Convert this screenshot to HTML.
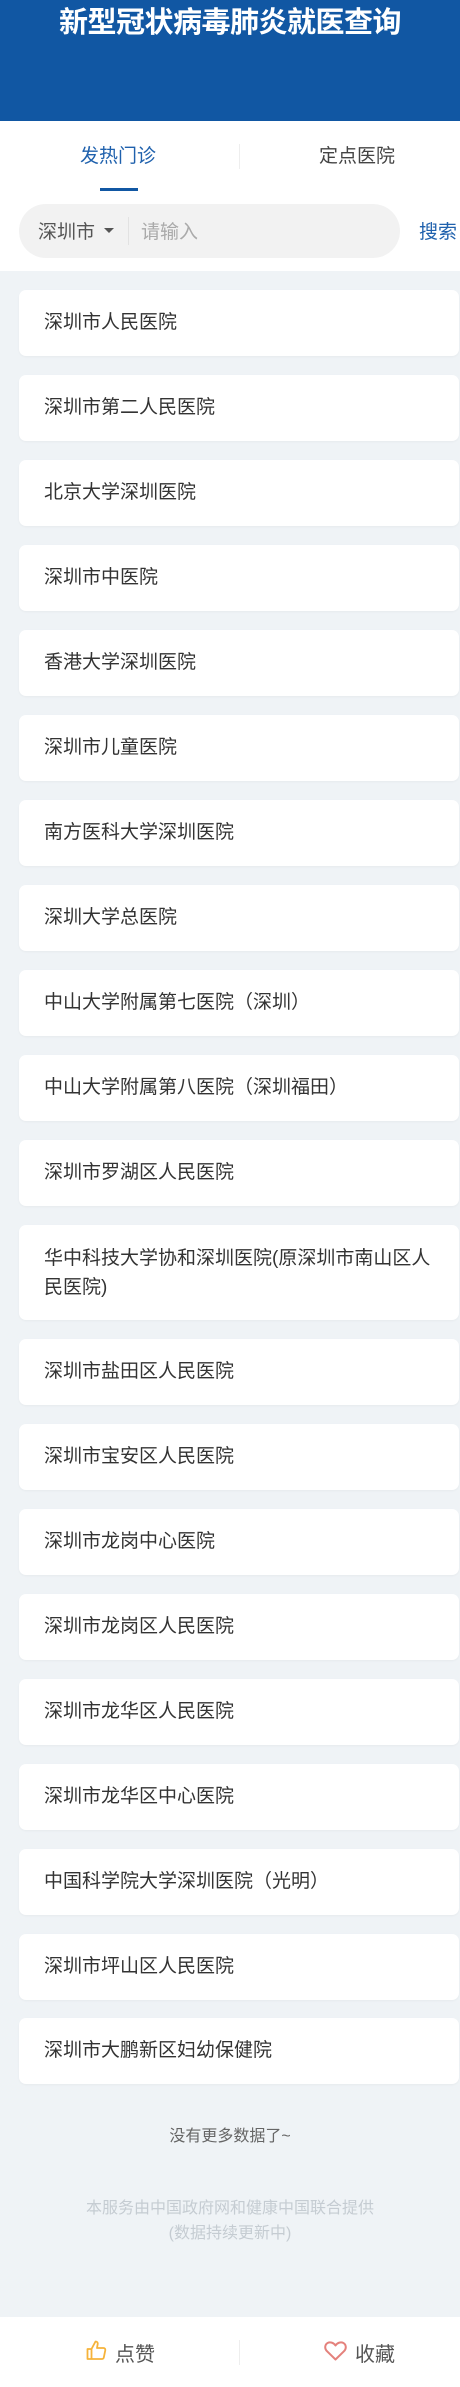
<!DOCTYPE html>
<html><head><meta charset="utf-8"><style>
*{margin:0;padding:0;box-sizing:border-box}
body{width:460px;height:2387px;overflow:hidden;background:#eff3f6;font-family:"Liberation Sans","Noto Sans CJK SC",sans-serif;position:relative}
.hd{position:absolute;left:0;top:0;width:460px;height:121px;background:#1157a3;color:#fff;font-weight:bold;font-size:29px;text-align:center;line-height:46px;letter-spacing:-0.5px}
.top{position:absolute;left:0;top:121px;width:460px;height:150px;background:#fff}
.tab{position:absolute;top:20px;font-size:19px;line-height:32px}
.sep{position:absolute;left:239px;top:23px;width:1px;height:25px;background:#eee}
.ul{position:absolute;left:100px;top:67px;width:38px;height:3px;background:#1157a3}
.sb{position:absolute;left:19px;top:83px;width:381px;height:54px;border-radius:27px;background:#f2f2f2}
.card{position:absolute;left:19px;width:440px;height:66px;background:#fff;border-radius:7px;font-size:19px;color:#333;padding-left:25px;padding-right:28px;line-height:66px;box-shadow:0 1px 2px rgba(0,0,0,.04)}
.card.two{height:95px;line-height:29px;padding-top:19px}
.bar{position:absolute;left:0;top:2317px;width:460px;height:70px;background:#fff}
</style></head><body>
<div class="hd">新型冠状病毒肺炎就医查询</div>
<div class="top">
<div class="tab" style="left:80px;color:#1f61ad">发热门诊</div>
<div class="sep"></div>
<div class="tab" style="left:319px;color:#444">定点医院</div>
<div class="ul"></div>
<div class="sb">
<span style="position:absolute;left:19px;top:13px;font-size:19px;color:#555">深圳市</span>
<span style="position:absolute;left:85px;top:24px;border-left:5px solid transparent;border-right:5px solid transparent;border-top:5px solid #555"></span>
<span style="position:absolute;left:109px;top:13px;width:1px;height:28px;background:#e2e2e2"></span>
<span style="position:absolute;left:122px;top:13px;font-size:19px;color:#aaa">请输入</span>
</div>
<div style="position:absolute;left:419px;top:96px;font-size:19px;color:#1f61ad;white-space:nowrap">搜索</div>
</div>
<div class="card" style="top:290px">深圳市人民医院</div>
<div class="card" style="top:375px">深圳市第二人民医院</div>
<div class="card" style="top:460px">北京大学深圳医院</div>
<div class="card" style="top:545px">深圳市中医院</div>
<div class="card" style="top:630px">香港大学深圳医院</div>
<div class="card" style="top:715px">深圳市儿童医院</div>
<div class="card" style="top:800px">南方医科大学深圳医院</div>
<div class="card" style="top:885px">深圳大学总医院</div>
<div class="card" style="top:970px">中山大学附属第七医院（深圳）</div>
<div class="card" style="top:1055px">中山大学附属第八医院（深圳福田）</div>
<div class="card" style="top:1140px">深圳市罗湖区人民医院</div>
<div class="card two" style="top:1225px">华中科技大学协和深圳医院(原深圳市南山区人民医院)</div>
<div class="card" style="top:1339px">深圳市盐田区人民医院</div>
<div class="card" style="top:1424px">深圳市宝安区人民医院</div>
<div class="card" style="top:1509px">深圳市龙岗中心医院</div>
<div class="card" style="top:1594px">深圳市龙岗区人民医院</div>
<div class="card" style="top:1679px">深圳市龙华区人民医院</div>
<div class="card" style="top:1764px">深圳市龙华区中心医院</div>
<div class="card" style="top:1849px">中国科学院大学深圳医院（光明）</div>
<div class="card" style="top:1934px">深圳市坪山区人民医院</div>
<div class="card" style="top:2018px">深圳市大鹏新区妇幼保健院</div>
<div style="position:absolute;left:0;width:460px;top:2122px;text-align:center;font-size:16px;color:#666">没有更多数据了~</div>
<div style="position:absolute;left:0;width:460px;top:2196px;text-align:center;font-size:16px;color:#c5ccd2;line-height:25px">本服务由中国政府网和健康中国联合提供<br>(数据持续更新中)</div>
<div class="bar">
<svg style="position:absolute;left:86px;top:23px" width="21" height="21" viewBox="0 0 21 21"><path d="M1.5 9h4v10h-4zM5.5 9l4-7.5c1.5 0 2.5 1 2.2 2.6L11 8h6.5c1.3 0 2 1 1.8 2.2l-1.5 7.3c-.2 1-1 1.5-2 1.5H5.5" fill="none" stroke="#f6b33a" stroke-width="1.8" stroke-linejoin="round"/></svg>
<span style="position:absolute;left:115px;top:21px;font-size:20px;color:#555">点赞</span>
<div style="position:absolute;left:239px;top:23px;width:1px;height:25px;background:#eee"></div>
<svg style="position:absolute;left:324px;top:24px" width="23" height="20" viewBox="0 0 23 20"><path d="M11.5 18.5L3 10.2C.3 7.5.8 3.6 3.6 2 6 .7 9.5 1.5 11.5 4.5 13.5 1.5 17 .7 19.4 2c2.8 1.6 3.3 5.5.6 8.2z" fill="none" stroke="#e4817c" stroke-width="2" stroke-linejoin="round"/></svg>
<span style="position:absolute;left:355px;top:21px;font-size:20px;color:#555">收藏</span>
</div>
</body></html>
